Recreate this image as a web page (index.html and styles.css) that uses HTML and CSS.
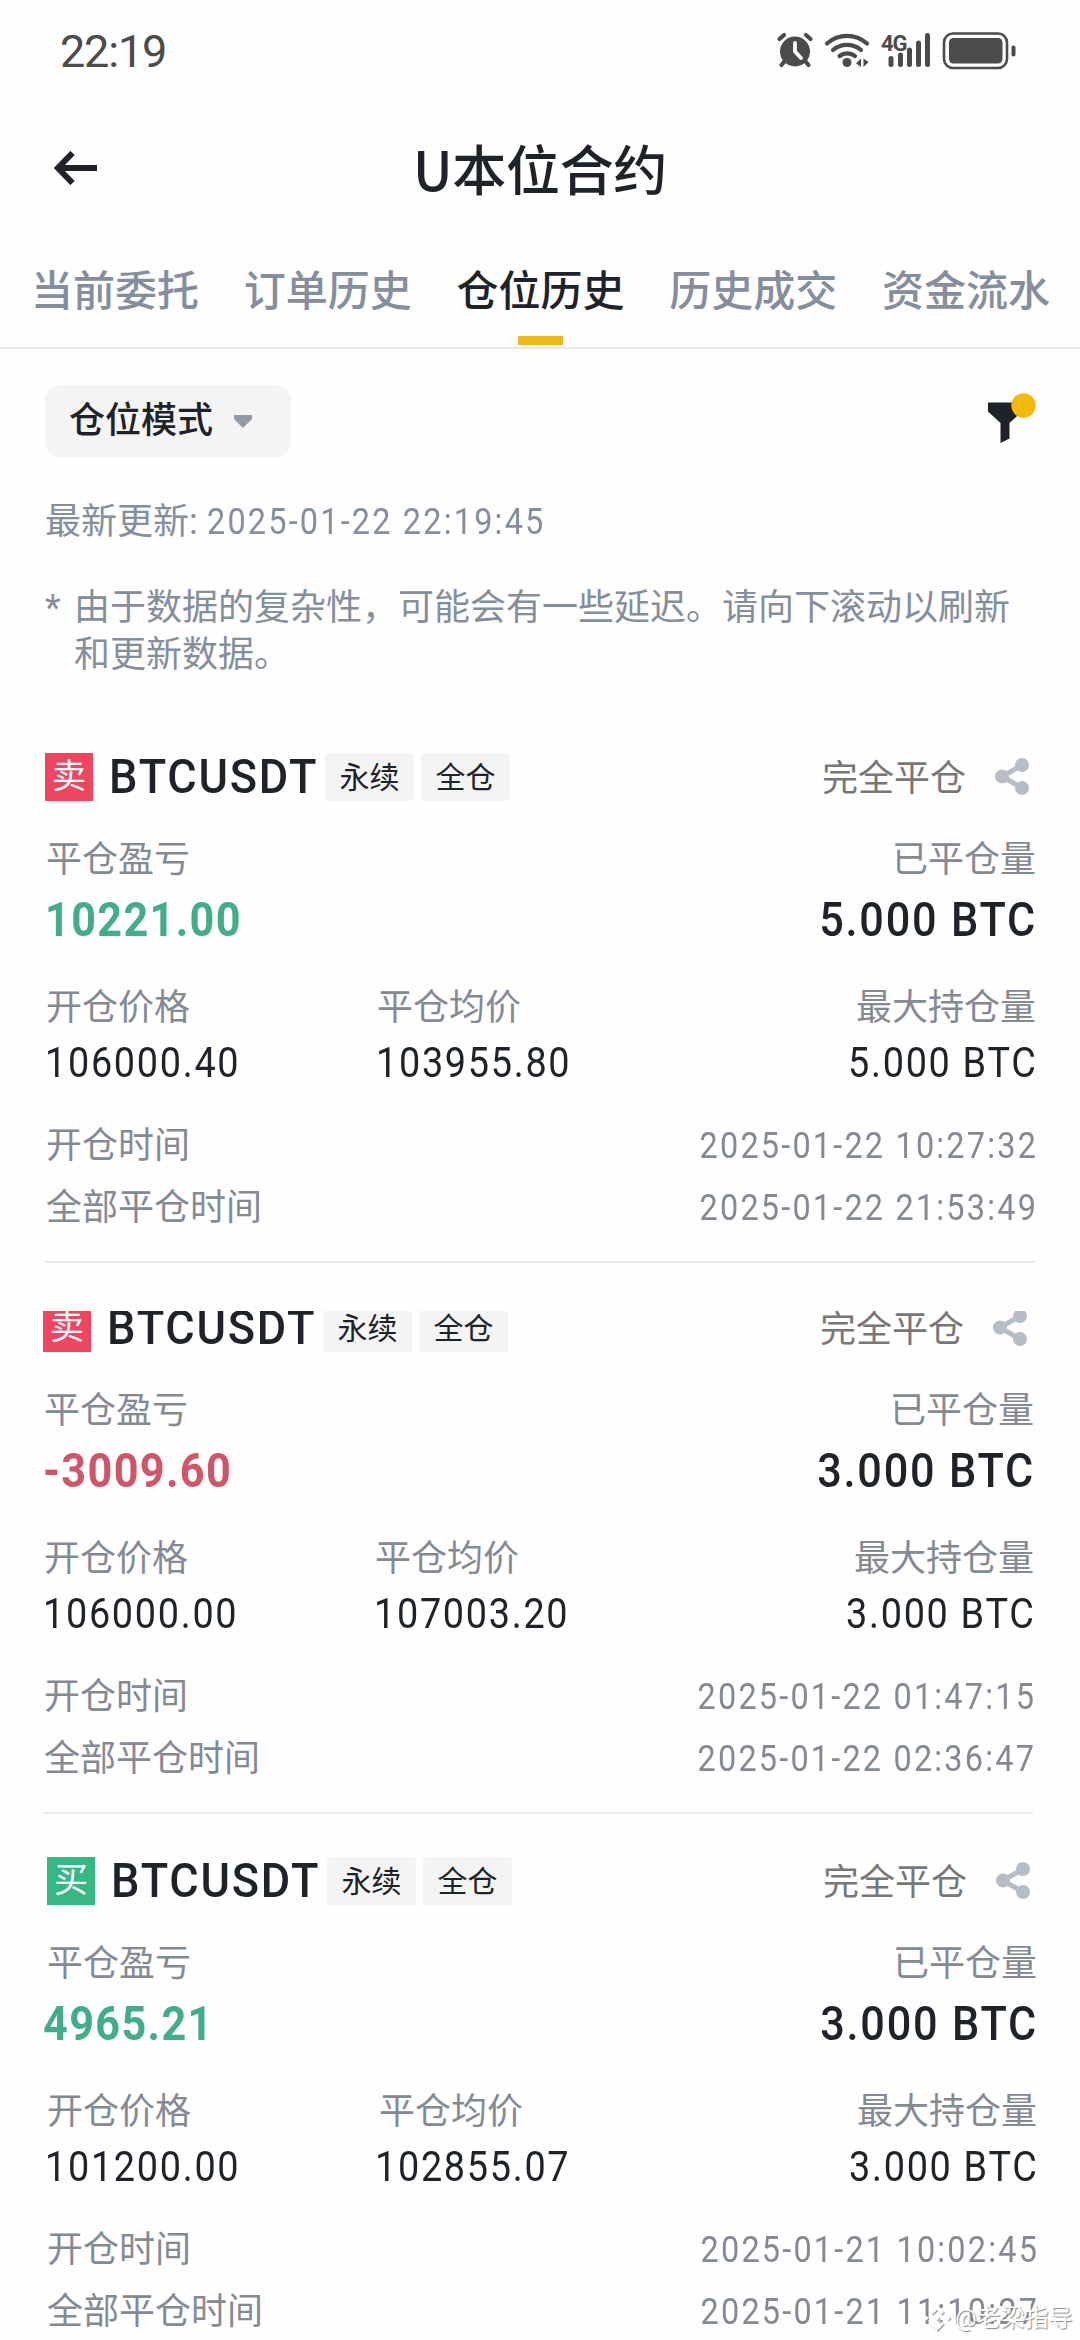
FILE: index.html
```html
<!DOCTYPE html>
<html lang="zh-CN">
<head>
<meta charset="utf-8">
<title>U本位合约</title>
<link rel="stylesheet" href="styles.css">
</head>
<body>
<svg class="defs" width="0" height="0" aria-hidden="true">
  <symbol id="share" viewBox="0 0 34 37">
    <path d="M27 7 7 18.500 27 30" fill="none" stroke="currentColor" stroke-width="5"/>
    <circle cx="27" cy="7" r="7" fill="currentColor"/>
    <circle cx="7" cy="18.500" r="7" fill="currentColor"/>
    <circle cx="27" cy="30" r="7" fill="currentColor"/>
  </symbol>
</svg>
<header class="status">
  <span class="clock">22:19</span>
  <svg class="status-icons" width="242" height="40" viewBox="0 0 242 40" fill="#4b4b4b" stroke="#4b4b4b">
    <circle cx="19" cy="20.500" r="15" stroke="none"/>
    <path d="M3.500 8 8 4M34.500 8 30 4M8 31 5.500 34M30 31 32.500 34" fill="none" stroke-width="4.200" stroke-linecap="round"/>
    <path d="M19 12v8.500l6 6.500" fill="none" stroke="#fff" stroke-width="3.800" stroke-linecap="round"/>
    <path d="M51 12.500a30 30 0 0 1 40 0M57 19a22 22 0 0 1 28 0M63.500 25a12.500 12.500 0 0 1 15.500 0" fill="none" stroke-width="4.200" stroke-linecap="round"/>
    <circle cx="71" cy="31.500" r="4.500" stroke="none"/>
    <path d="M85 27.500v8.500l-5-3.800zM87.500 27.500v8.500l5-5z" stroke="none"/>
    <path d="M115 27.500v6M124.500 24v9.500M133.500 19v14.500M142.500 12v21.500M151.500 4.500v29" fill="none" stroke-width="5" stroke-linecap="round"/>
    <rect x="168" y="2.500" width="63" height="34.500" rx="9" fill="none" stroke-width="2.600"/>
    <rect x="173" y="7" width="53.500" height="25.500" rx="4.500" stroke="none"/>
    <rect x="235.500" y="14.500" width="4" height="11" rx="2" stroke="none"/>
    <text class="net" x="105" y="19.500">4G</text>
  </svg>
</header>
<nav class="topbar">
  <svg class="back" width="44" height="34" viewBox="0 0 44 34"><path d="M43 17H5M18.500 2 4 17l14.500 15" fill="none" stroke="#1e2329" stroke-width="6"/></svg>
  <h1 class="title">U本位合约</h1>
</nav>
<div class="tabs">
  <span class="tab">当前委托</span>
  <span class="tab">订单历史</span>
  <span class="tab active">仓位历史</span>
  <span class="tab">历史成交</span>
  <span class="tab">资金流水</span>
</div>
<div class="filters">
  <button class="mode">仓位模式<svg width="18" height="13" viewBox="0 0 18 13"><path d="M0 0h18v4L9 13 0 4z" fill="#929aa5"/></svg></button>
  <svg class="funnel" width="48" height="50" viewBox="0 0 48 50"><path d="M0 9.500h34v9L21.500 30v15.500L12.500 50V30L0 18.500z" fill="#1e2329"/><circle cx="35.500" cy="12.500" r="12.200" fill="#f0b90b"/></svg>
</div>
<p class="updated">最新更新: <span class="date">2025-01-22 22:19:45</span></p>
<p class="note"><span class="star">*</span><span>由于数据的复杂性，可能会有一些延迟。请向下滚动以刷新和更新数据。</span></p>

<main>
<section class="card">
  <div class="head">
    <span class="side sell">卖</span><span class="pair">BTCUSDT</span><span class="chip">永续</span><span class="chip">全仓</span>
    <span class="state">完全平仓</span><svg class="share" width="34" height="37"><use href="#share"/></svg>
  </div>
  <div class="row label"><span>平仓盈亏</span><span>已平仓量</span></div>
  <div class="row big"><span class="up">10221.00</span><span class="qty">5.000 BTC</span></div>
  <div class="row cols label second"><span>开仓价格</span><span>平仓均价</span><span>最大持仓量</span></div>
  <div class="row cols value"><span>106000.40</span><span>103955.80</span><span class="amt">5.000 BTC</span></div>
  <div class="row label time"><span>开仓时间</span><span class="date">2025-01-22 10:27:32</span></div>
  <div class="row label time closed"><span>全部平仓时间</span><span class="date">2025-01-22 21:53:49</span></div>
</section>
<section class="card shifted">
  <div class="head cut">
    <span class="side sell">卖</span><span class="pair">BTCUSDT</span><span class="chip">永续</span><span class="chip">全仓</span>
    <span class="state">完全平仓</span><svg class="share" width="34" height="37"><use href="#share"/></svg>
  </div>
  <div class="row label"><span>平仓盈亏</span><span>已平仓量</span></div>
  <div class="row big"><span class="down">-3009.60</span><span class="qty">3.000 BTC</span></div>
  <div class="row cols label second"><span>开仓价格</span><span>平仓均价</span><span>最大持仓量</span></div>
  <div class="row cols value"><span>106000.00</span><span>107003.20</span><span class="amt">3.000 BTC</span></div>
  <div class="row label time"><span>开仓时间</span><span class="date">2025-01-22 01:47:15</span></div>
  <div class="row label time closed"><span>全部平仓时间</span><span class="date">2025-01-22 02:36:47</span></div>
</section>
<section class="card last">
  <div class="head">
    <span class="side buy">买</span><span class="pair">BTCUSDT</span><span class="chip">永续</span><span class="chip">全仓</span>
    <span class="state">完全平仓</span><svg class="share" width="34" height="37"><use href="#share"/></svg>
  </div>
  <div class="row label"><span>平仓盈亏</span><span>已平仓量</span></div>
  <div class="row big"><span class="up">4965.21</span><span class="qty">3.000 BTC</span></div>
  <div class="row cols label second"><span>开仓价格</span><span>平仓均价</span><span>最大持仓量</span></div>
  <div class="row cols value"><span>101200.00</span><span>102855.07</span><span class="amt">3.000 BTC</span></div>
  <div class="row label time"><span>开仓时间</span><span class="date">2025-01-21 10:02:45</span></div>
  <div class="row label time closed"><span>全部平仓时间</span><span class="date">2025-01-21 11:10:27</span></div>
</section>
</main>
<div class="watermark">
  <svg width="28" height="28" viewBox="0 0 28 28" fill="#fff"><path d="M14 1 21 8 18.500 10.500 14 6 9.500 10.500 7 8zM3 11.500 5.500 14 3 16.500.5 14zM14 11.500 16.500 14 14 16.500 11.500 14zM25 11.500 27.500 14 25 16.500 22.500 14zM9.500 17.500 14 22l4.500-4.500L21 20l-7 7-7-7z"/></svg>
  <span>@老梁指导</span>
</div>
</body>
</html>
```
FILE: styles.css
```css
* { box-sizing: border-box; }
body {
  margin: 0;
  width: 1080px;
  height: 2340px;
  overflow: hidden;
  position: relative;
  background: #fefefe;
  color: #1e2329;
  font-family: Roboto, "Noto Sans CJK SC", sans-serif;
  font-size: 36px;
}
p, h1 { margin: 0; }
.defs { position: absolute; }

.status {
  height: 104px;
  padding: 31px 60px 0 60px;
  display: flex;
  justify-content: space-between;
  align-items: flex-start;
}
.clock { font-size: 45px; line-height: 42px; letter-spacing: -1.2px; color: #4b4b4b; }
.status-icons { margin-right: 2px; }
.net { font: 700 22px Roboto, sans-serif; letter-spacing: -1px; stroke: none; }

.topbar {
  height: 130px;
  padding: 0 54px 3px 54px;
  display: grid;
  grid-template-columns: 44px 1fr 44px;
  align-items: center;
}
.title {
  text-align: center;
  font: 500 54px/80px "Noto Sans CJK SC", sans-serif;
  letter-spacing: -0.3px;
}

.tabs {
  height: 115px;
  padding: 38px 30px 0 31px;
  display: flex;
  justify-content: space-between;
  border-bottom: 2px solid #eaeaea;
}
.tab {
  font-size: 42px;
  line-height: 40px;
  font-weight: 500;
  color: #848e9c;
  white-space: nowrap;
}
.tab.active {
  color: #1e2329;
  display: flex;
  flex-direction: column;
  align-items: center;
  justify-content: space-between;
}
.tab.active::after { content: ""; width: 45px; height: 9px; margin-bottom: 2px; background: #ecb81a; }

.filters {
  padding: 36px 36px 0 45px;
  display: flex;
  justify-content: space-between;
}
.mode {
  width: 246px;
  height: 72px;
  padding: 0 0 0 24px;
  border: 0;
  border-radius: 16px;
  background: #f4f4f4;
  color: #1e2329;
  font: 500 36px/72px Roboto, "Noto Sans CJK SC", sans-serif;
  display: flex;
  align-items: center;
  gap: 21px;
}
.funnel { margin: 8px 8px 0 0; }

.updated { margin-top: 43px; padding-left: 45px; line-height: 44px; color: #848e9c; }
.note {
  margin-top: 41px;
  padding: 0 60px 0 45px;
  display: flex;
  line-height: 47px;
  color: #848e9c;
}
.star { width: 29px; flex: none; }

main { padding-top: 74px; }
.card {
  height: 510px;
  margin: 0 45px 41px 45px;
  border-bottom: 2px solid #eaeaea;
}
.card.shifted { margin: 0 47px 43px 43px; }
.card.last { margin: 0 44px 0 47px; border: 0; }

.head { height: 48px; display: flex; align-items: center; }
.side {
  width: 48px;
  height: 48px;
  line-height: 47px;
  text-align: center;
  font-size: 34px;
  color: #fff;
}
.sell { background: #ee4560; }
.buy { background: #35b884; }
.chip {
  width: 89px;
  height: 48px;
  margin-right: 7px;
  border-radius: 4px;
  background: #f4f4f4;
  font-size: 30px;
  line-height: 50px;
  text-align: center;
}
.state { margin-left: auto; color: #777; line-height: 54px; padding-top: 4px; }
.share { margin: 0 6px 1px 29px; color: #b7bdc6; }
.cut { clip-path: inset(7px 0 0 0); }

.row { display: flex; justify-content: space-between; white-space: nowrap; }
.label { margin-top: 39px; line-height: 40px; color: #848a94; }
.label > span { position: relative; left: 1px; }
.last .label > span:first-child { left: 0; }
.big { margin-top: 15px; line-height: 50px; font-size: 48px; font-weight: 500; }
.up { color: #42ae87; }
.down { color: #cf5668; }
.second { margin-top: 43px; }
.cols { display: grid; grid-template-columns: 331px 1fr auto; }
.value { margin-top: 13px; line-height: 43px; font-size: 42px; }
.time { margin-top: 42px; }
.time.closed { margin-top: 22px; }

/* Narrow, widely tracked figures */
.pair, .date, .big span, .value span {
  display: inline-block;
  transform: scaleX(0.9);
  transform-origin: left;
}
.pair {
  width: 216px;
  margin-left: 16px;
  font-size: 48.500px;
  font-weight: 500;
  line-height: 48px;
  transform: scaleX(0.93);
  letter-spacing: 1.900px;
}
.date { letter-spacing: 2.450px; }
.big .up, .big .down { font-weight: 700; letter-spacing: 1.500px; }
.big .qty { letter-spacing: 2px; margin-right: -2px; transform-origin: right; }
.value span { letter-spacing: 1.900px; }
.value .amt { margin-right: -2px; transform-origin: right; }
.row .date { margin-right: -2px; transform-origin: right; }
.last .up { margin-left: -4px; }
.last .value { grid-template-columns: 330px 1fr auto; margin-left: -2px; }

.watermark {
  position: absolute;
  left: 923px;
  top: 2302px;
  display: flex;
  align-items: center;
  gap: 4px;
  color: #fff;
  font-size: 24px;
  line-height: 32px;
  text-shadow: 1px 1px 1px #888;
}
.watermark svg { filter: drop-shadow(1px 1px 0.500px #999); }
```
